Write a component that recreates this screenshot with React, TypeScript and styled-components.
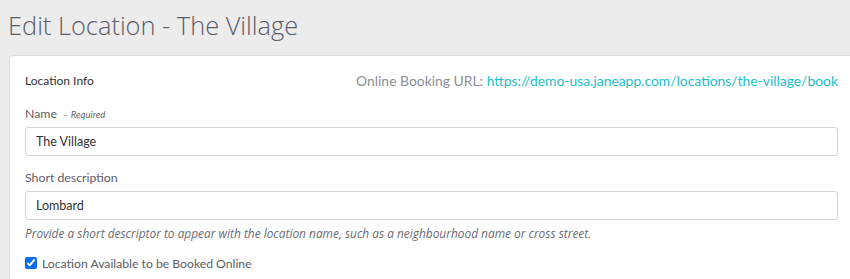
import React from "react";
import styled, { createGlobalStyle } from "styled-components";

const GlobalStyle = createGlobalStyle`
  html, body {
    margin: 0;
    padding: 0;
    background: #ececec;
    font-family: Lato, "Open Sans", sans-serif;
    overflow: hidden;
  }
`;

const Page = styled.div`
  padding: 0 0 0 8px;
`;

const Title = styled.h1`
  margin: 0;
  padding-top: 8px;
  height: 47px;
  font-family: "Open Sans", Lato, sans-serif;
  font-size: 25.4px;
  line-height: 34px;
  font-weight: 300;
  color: #5d5c69;
`;

const Card = styled.div`
  margin-left: 1px;
  background: #fff;
  border-top: 1px solid #dcdcdc;
  border-left: 1px solid #e2e2e2;
  border-top-left-radius: 4px;
  padding: 14px 12px 20px 15px;
`;

const HeaderRow = styled.div`
  display: flex;
  justify-content: space-between;
  align-items: center;
  height: 20px;
  margin-bottom: 16px;
`;

const SectionTitle = styled.div`
  font-size: 12px;
  color: #333;
`;

const BookingUrl = styled.div`
  font-size: 13.9px;
  color: #8e8e96;
  a {
    color: #1cbec8;
    text-decoration: none;
  }
`;

const Field = styled.div`
  display: flex;
  flex-direction: column;
  margin-bottom: 14px;
`;

const Label = styled.label`
  display: block;
  height: 16px;
  font-size: 12.3px;
  color: #5d5c69;
  line-height: 16px;
  margin-bottom: 5px;
  em {
    font-size: 9.5px;
    line-height: 16px;
    color: #666;
    margin-left: 3px;
  }
`;

const Input = styled.input`
  box-sizing: border-box;
  height: 29px;
  width: 100%;
  border: 1px solid #d4d4d4;
  border-radius: 3px;
  padding: 0 10px;
  font-family: inherit;
  font-size: 12.5px;
  color: #333;
  outline: none;
`;

const Help = styled.div`
  font-family: "Open Sans", Lato, sans-serif;
  font-size: 11.9px;
  font-style: italic;
  color: #6b6b73;
  line-height: 16px;
  margin-top: 5px;
`;

const CheckRow = styled.label`
  display: flex;
  align-items: center;
  height: 16px;
  gap: 5px;
  font-size: 12.2px;
  color: #5d5c69;
  input {
    margin: 0;
    width: 12px;
    height: 12px;
    accent-color: #0a6cf0;
  }
`;

export default function App() {
  return (
    <Page>
      <GlobalStyle />
      <Title>Edit Location - The Village</Title>
      <Card>
        <HeaderRow>
          <SectionTitle>Location Info</SectionTitle>
          <BookingUrl>
            Online Booking URL:{" "}
            <a href="#">https://demo-usa.janeapp.com/locations/the-village/book</a>
          </BookingUrl>
        </HeaderRow>
        <Field>
          <Label>
            Name <em>– Required</em>
          </Label>
          <Input defaultValue="The Village" />
        </Field>
        <Field>
          <Label>Short description</Label>
          <Input defaultValue="Lombard" />
          <Help>
            Provide a short descriptor to appear with the location name, such as a
            neighbourhood name or cross street.
          </Help>
        </Field>
        <CheckRow>
          <input type="checkbox" defaultChecked />
          Location Available to be Booked Online
        </CheckRow>
      </Card>
    </Page>
  );
}
